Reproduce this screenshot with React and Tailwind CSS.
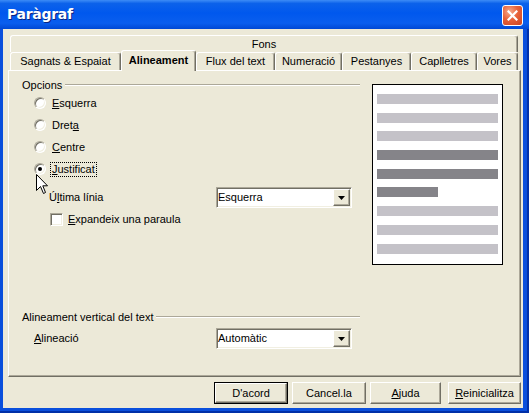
import React from "react";

const raised =
  "bg-[#ece9d8] border border-t-white border-l-white border-r-[#716f64] border-b-[#716f64] shadow-[inset_-1px_-1px_0_#aca899]";

function Radio({ checked }) {
  return (
    <div className="relative w-[12px] h-[12px] rounded-full bg-white border border-t-[#aca899] border-l-[#aca899] border-r-white border-b-white shadow-[inset_1px_1px_0_#716f64,inset_-1px_-1px_0_#f1efe2] shrink-0">
      {checked && (
        <div className="absolute left-[3px] top-[3px] w-[4px] h-[4px] rounded-full bg-black" />
      )}
    </div>
  );
}

function Select({ value }) {
  return (
    <div className="w-[136px] h-[21px] bg-white border border-t-[#aca899] border-l-[#aca899] border-r-white border-b-white shadow-[inset_1px_1px_0_#716f64,inset_-1px_-1px_0_#f1efe2] flex items-center pl-[1px] pr-[1px]">
      <span className="flex-1 leading-none">{value}</span>
      <div className={`w-[17px] h-[17px] flex items-center justify-center ${raised}`}>
        <svg width="7" height="4" viewBox="0 0 7 4">
          <path d="M0 0H7L3.5 4Z" fill="#000" />
        </svg>
      </div>
    </div>
  );
}

function Btn({ children, w, def, className = "" }) {
  const inner = (
    <div className={`h-full w-full flex items-center justify-center ${raised}`}>{children}</div>
  );
  return def ? (
    <div className={`h-[22px] border border-black ${w} ${className}`}>{inner}</div>
  ) : (
    <div className={`h-[22px] ${w} ${className}`}>{inner}</div>
  );
}

function Tab({ w, children, sel }) {
  if (sel)
    return (
      <div
        className={`${w} relative z-10 mt-[-2px] h-[21px] bg-[#ece9d8] border-l border-t border-r border-t-white border-l-white border-r-[#716f64] shadow-[inset_-1px_0_0_#aca899] rounded-t-[3px] flex items-center justify-center font-bold pb-[2px]`}
      >
        {children}
      </div>
    );
  return (
    <div
      className={`${w} h-[18px] border-l border-t border-r border-t-white border-l-white border-r-[#716f64] shadow-[inset_-1px_0_0_#aca899] rounded-t-[3px] flex items-center justify-center`}
    >
      {children}
    </div>
  );
}

function GroupHeader({ label, className = "" }) {
  return (
    <div className={`h-[14px] flex items-center ${className}`}>
      <span className="whitespace-nowrap">{label}</span>
      <div className="flex-1 ml-[3px] h-[2px] border-t border-t-[#aca899] border-b border-b-white" />
    </div>
  );
}

export default function App() {
  const bars = [
    { c: "bg-[#c4c2c8]", w: "w-[121px]" },
    { c: "bg-[#c4c2c8]", w: "w-[121px]" },
    { c: "bg-[#c4c2c8]", w: "w-[121px]" },
    { c: "bg-[#858489]", w: "w-[121px]" },
    { c: "bg-[#858489]", w: "w-[121px]" },
    { c: "bg-[#858489]", w: "w-[61px]" },
    { c: "bg-[#c4c2c8]", w: "w-[121px]" },
    { c: "bg-[#c4c2c8]", w: "w-[121px]" },
    { c: "bg-[#c4c2c8]", w: "w-[121px]" },
  ];
  return (
    <div className="relative w-[529px] h-[413px] overflow-hidden flex flex-col text-[11px] text-black font-['Liberation_Sans',Arial,sans-serif] bg-[#0a4fdc] select-none">
      {/* Title bar */}
      <div className="h-[29px] flex items-center pl-[7px] pr-[6px] bg-[linear-gradient(to_bottom,#3d8cf6_0%,#0c62ea_12%,#0058ee_45%,#0a5eee_80%,#0048d4_100%)]">
        <span className="text-white font-bold text-[14px] [text-shadow:1px_1px_0_#0b2580] font-['DejaVu_Sans',Arial,sans-serif] tracking-[-0.3px]">
          Paràgraf
        </span>
        <div className="ml-auto mt-[1px] w-[21px] h-[21px] rounded-[3px] border border-white bg-[radial-gradient(circle_at_35%_30%,#f6ab8e_0%,#e8623a_45%,#cc4320_100%)] flex items-center justify-center">
          <svg width="11" height="11" viewBox="0 0 11 11">
            <path d="M1.5 1.5L9.5 9.5M9.5 1.5L1.5 9.5" stroke="#fff" strokeWidth="2.2" strokeLinecap="square" />
          </svg>
        </div>
      </div>

      {/* Frame */}
      <div className="flex-1 flex pl-[3px] pr-[6px] pb-[5px] bg-[#0a4fdc] shadow-[inset_-2px_-2px_0_#0030a8]">
        <div className="flex-1 bg-[#ece9d8] flex flex-col pt-[6px] pl-[5px] pr-[2px]">
          {/* Tabs */}
          <div className="pl-[2px] pr-[3px]">
            <div className="h-[17px] border-l border-t border-r border-t-white border-l-white border-r-[#716f64] shadow-[inset_-1px_0_0_#aca899] rounded-t-[3px] flex items-center justify-center">
              Fons
            </div>
            <div className="flex h-[18px]">
              <Tab w="w-[111px]">Sagnats &amp; Espaiat</Tab>
              <Tab w="w-[75px]" sel>
                Alineament
              </Tab>
              <Tab w="w-[79px]">Flux del text</Tab>
              <Tab w="w-[67px]">Numeració</Tab>
              <Tab w="w-[69px]">Pestanyes</Tab>
              <Tab w="w-[66px]">Caplletres</Tab>
              <Tab w="w-[41px]">Vores</Tab>
            </div>
          </div>

          {/* Page */}
          <div className="h-[307px] border border-t-white border-l-white border-r-[#716f64] border-b-[#716f64] shadow-[inset_-1px_-1px_0_#aca899] flex flex-col">
            <div className="h-[239px] flex">
              <div className="w-[351px] pl-[13px] flex flex-col">
                <GroupHeader label="Opcions" className="mt-[7px]" />
                <div className="pl-[12px] flex flex-col">
                  <div className="h-[22px] flex items-center">
                    <Radio />
                    <span className="ml-[6px]">
                      <u>E</u>squerra
                    </span>
                  </div>
                  <div className="h-[22px] flex items-center">
                    <Radio />
                    <span className="ml-[6px]">
                      Dret<u>a</u>
                    </span>
                  </div>
                  <div className="h-[22px] flex items-center">
                    <Radio />
                    <span className="ml-[6px]">
                      <u>C</u>entre
                    </span>
                  </div>
                  <div className="h-[22px] flex items-center">
                    <Radio checked />
                    <span className="ml-[5px] px-[1px] leading-[13px] outline-1 outline-dotted outline-black">
                      <u>J</u>ustificat
                    </span>
                  </div>
                </div>
                <div className="mt-[7px] h-[21px] flex items-center">
                  <span className="ml-[27px] w-[167px]">
                    Ú<u>l</u>tima línia
                  </span>
                  <Select value="Esquerra" />
                </div>
                <div className="h-[22px] flex items-center pl-[28px]">
                  <div className="w-[13px] h-[13px] bg-white border border-t-[#aca899] border-l-[#aca899] border-r-white border-b-white shadow-[inset_1px_1px_0_#716f64,inset_-1px_-1px_0_#f1efe2]" />
                  <span className="ml-[5px]">
                    <u>E</u>xpandeix una paraula
                  </span>
                </div>
              </div>
              <div className="ml-[12px] mt-[13px] w-[131px] h-[181px] bg-white border border-black flex flex-col pl-[4px] pt-[9px] gap-[8.7px]">
                {bars.map((b, i) => (
                  <div key={i} className={`h-[10px] ${b.w} ${b.c}`} />
                ))}
              </div>
            </div>
            <div className="w-[351px] pl-[13px]">
              <GroupHeader label="Alineament vertical del text" />
            </div>
            <div className="mt-[4px] h-[21px] flex items-center">
              <span className="ml-[25px] w-[182px]">
                <u>A</u>lineació
              </span>
              <Select value="Automàtic" />
            </div>
          </div>

          {/* Buttons */}
          <div className="mt-[5px] flex justify-end">
            <Btn w="w-[74px]" def>
              D'acord
            </Btn>
            <Btn w="w-[74px]" className="ml-[4px]">
              Cancel.la
            </Btn>
            <Btn w="w-[71px]" className="ml-[4px]">
              <span>
                <u>A</u>juda
              </span>
            </Btn>
            <Btn w="w-[73px]" className="ml-[7px]">
              <span>
                <u>R</u>einicialitza
              </span>
            </Btn>
          </div>
        </div>
      </div>

      {/* Mouse cursor */}
      <svg
        className="absolute left-[36px] top-[174px]"
        width="13"
        height="21"
        viewBox="0 0 13 21"
      >
        <path
          d="M0.5 0.5V16.5L4.5 12.5L7.5 19.5L9.5 18.5L6.8 11.8H11.5Z"
          fill="#fff"
          stroke="#000"
          strokeWidth="1"
          strokeLinejoin="miter"
        />
      </svg>
    </div>
  );
}
